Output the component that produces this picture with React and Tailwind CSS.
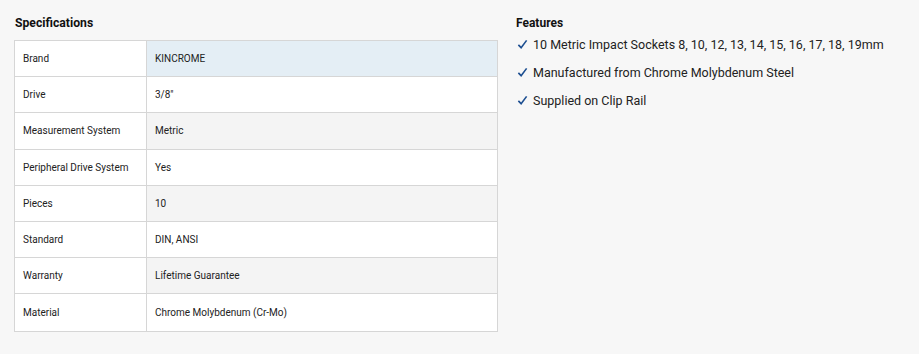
const specs = [
  ['Brand', 'KINCROME', 'bg-[#e4eef5]'],
  ['Drive', '3/8"', 'bg-white'],
  ['Measurement System', 'Metric', 'bg-[#f4f4f4]'],
  ['Peripheral Drive System', 'Yes', 'bg-white'],
  ['Pieces', '10', 'bg-[#f4f4f4]'],
  ['Standard', 'DIN, ANSI', 'bg-white'],
  ['Warranty', 'Lifetime Guarantee', 'bg-[#f4f4f4]'],
  ['Material', 'Chrome Molybdenum (Cr-Mo)', 'bg-white'],
];

const features = [
  '10 Metric Impact Sockets 8, 10, 12, 13, 14, 15, 16, 17, 18, 19mm',
  'Manufactured from Chrome Molybdenum Steel',
  'Supplied on Clip Rail',
];

function Check() {
  return (
    <svg width="11" height="11" viewBox="0 0 12 12" className="shrink-0">
      <path d="M1.5 6.5 L4.5 9.5 L10.5 1.5" fill="none" stroke="#1d4f91" strokeWidth="1.8" />
    </svg>
  );
}

export default function App() {
  return (
    <div className="flex h-[354px] w-[919px] bg-[#f7f7f7] pt-[15px] font-['Roboto',sans-serif] text-[#222]">
      <div className="ml-[14px] w-[484px]">
        <h2 className="mb-[8px] pl-px text-[12.2px] font-bold leading-[17px] text-[#111]">Specifications</h2>
        <div className="border border-[#d6d6d6] bg-white">
          {specs.map(([label, value, bg], i) => (
            <div key={label} className={`flex h-[36.2px] ${i < specs.length - 1 ? 'border-b border-[#d6d6d6]' : ''}`}>
              <div className="flex w-[132px] items-center border-r border-[#d6d6d6] bg-white pl-[8px] text-[10px]">{label}</div>
              <div className={`flex flex-1 items-center pl-[8px] text-[10px] ${bg}`}>{value}</div>
            </div>
          ))}
        </div>
      </div>
      <div className="ml-[18px]">
        <h2 className="mb-[4px] text-[12px] font-bold leading-[17px] text-[#111]">Features</h2>
        <ul className="flex flex-col gap-[11px]">
          {features.map((f) => (
            <li key={f} className="flex items-center gap-[5px] pl-px text-[12.5px] leading-[17px]">
              <Check />
              <span>{f}</span>
            </li>
          ))}
        </ul>
      </div>
    </div>
  );
}
